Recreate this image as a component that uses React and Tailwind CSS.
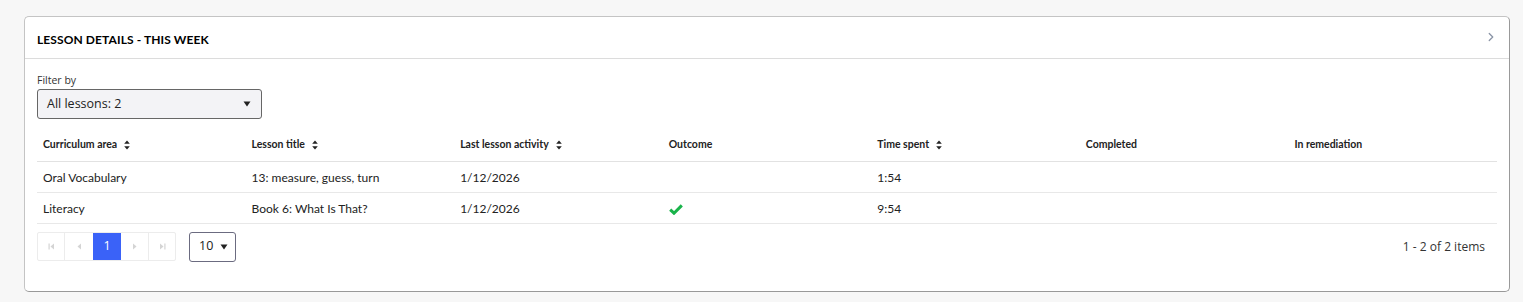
import { ChevronRight } from "lucide-react";

const columns = [
  { label: "Curriculum area", sort: true },
  { label: "Lesson title", sort: true },
  { label: "Last lesson activity", sort: true },
  { label: "Outcome" },
  { label: "Time spent", sort: true },
  { label: "Completed" },
  { label: "In remediation" },
];

const rows = [
  { area: "Oral Vocabulary", title: "13: measure, guess, turn", date: "1/12/2026", passed: false, time: "1:54" },
  { area: "Literacy", title: "Book 6: What Is That?", date: "1/12/2026", passed: true, time: "9:54" },
];

function SortIcon() {
  return (
    <svg width="6" height="10" viewBox="0 0 6 10" className="ml-[7px] inline-block">
      <path d="M3 0.5 L5.8 3.8 H0.2 Z" fill="#222" />
      <path d="M3 9.5 L5.8 6.2 H0.2 Z" fill="#222" />
    </svg>
  );
}

function Caret() {
  return (
    <svg width="8" height="6" viewBox="0 0 8 6">
      <path d="M0.5 0.5 H7.5 L4 5.5 Z" fill="#222" />
    </svg>
  );
}

function Check() {
  return (
    <svg width="14" height="11" viewBox="0 0 14 11">
      <path d="M1.2 5.6 L5 9.2 L12.8 1.4" fill="none" stroke="#19b34a" strokeWidth="3" />
    </svg>
  );
}

function PagerArrow({ kind }) {
  const c = "#d4d4d4";
  return (
    <svg width="7" height="7" viewBox="0 0 7 7">
      {kind === "first" && (
        <>
          <rect x="0.5" y="0.5" width="1.2" height="6" fill={c} />
          <path d="M6 0.5 V6.5 L2.5 3.5 Z" fill={c} />
        </>
      )}
      {kind === "prev" && <path d="M5 0.5 V6.5 L1.5 3.5 Z" fill={c} />}
      {kind === "next" && <path d="M2 0.5 V6.5 L5.5 3.5 Z" fill={c} />}
      {kind === "last" && (
        <>
          <path d="M1 0.5 V6.5 L4.5 3.5 Z" fill={c} />
          <rect x="5.3" y="0.5" width="1.2" height="6" fill={c} />
        </>
      )}
    </svg>
  );
}

export default function App() {
  return (
    <div className="min-h-[302px] bg-[#f7f7f7] pt-4 pl-6 pr-[13px] pb-[10px] font-['Open_Sans',sans-serif] text-[#222]">
      <div className="rounded-[5px] border border-[#c4c4c4] border-r-[#999] border-b-[#999] bg-white h-[276px]">
        <div className="flex h-[42px] items-center justify-between border-b border-[#dcdcdc] pl-[12px] pr-[11px]">
          <h2 className="mt-[5px] font-['Lato',sans-serif] text-[12px] font-bold text-black tracking-[0.1px]">
            LESSON DETAILS - THIS WEEK
          </h2>
          <ChevronRight size={14} strokeWidth={2.2} className="-mt-[2px] text-[#8a94a6]" />
        </div>

        <div className="px-3 pt-[14px]">
          <div className="text-[10.5px] leading-[14px] text-[#333]">Filter by</div>
          <button className="mt-[2px] flex h-[30px] w-[225px] items-center justify-between rounded-[3px] border border-[#666] bg-[#f3f3f6] pl-[9px] pr-[10px] text-[12.5px] text-[#222]">
            <span>All lessons: 2</span>
            <Caret />
          </button>

          <table className="w-[1460px] table-fixed border-collapse font-['Lato',sans-serif]">
            <thead>
              <tr className="h-[42px] border-b border-[#e2e2e2]">
                {columns.map((c) => (
                  <th key={c.label} className="px-[6px] pt-[11px] text-left text-[10.5px] font-bold text-[#222]">
                    <span className="inline-flex items-center">
                      {c.label}
                      {c.sort && <SortIcon />}
                    </span>
                  </th>
                ))}
              </tr>
            </thead>
            <tbody>
              {rows.map((r) => (
                <tr key={r.area} className="h-[31px] border-b border-[#e8e8e8] text-[12px] text-[#222]">
                  <td className="px-[6px] pt-[3px]">{r.area}</td>
                  <td className="px-[6px] pt-[3px]">{r.title}</td>
                  <td className="px-[6px] pt-[3px]">{r.date}</td>
                  <td className="px-[6px] pt-[3px]">{r.passed && <Check />}</td>
                  <td className="px-[6px] pt-[3px]">{r.time}</td>
                  <td className="px-[6px]"></td>
                  <td className="px-[6px]"></td>
                </tr>
              ))}
            </tbody>
          </table>

          <div className="mt-[8px] flex w-[1460px] items-center justify-between">
            <div className="flex items-center">
              <div className="flex h-[29px] overflow-hidden rounded-[2px] border border-[#ececec]">
                <span className="flex w-[27px] items-center justify-center border-r border-[#ececec]"><PagerArrow kind="first" /></span>
                <span className="flex w-[28px] items-center justify-center"><PagerArrow kind="prev" /></span>
                <span className="flex w-[28px] items-center justify-center bg-[#3a62f8] text-[12.5px] text-white">1</span>
                <span className="flex w-[28px] items-center justify-center border-r border-[#ececec]"><PagerArrow kind="next" /></span>
                <span className="flex w-[26px] items-center justify-center"><PagerArrow kind="last" /></span>
              </div>
              <button className="ml-[13px] flex h-[30px] w-[47px] items-center justify-between rounded-[3px] border border-[#6b6b80] bg-white pl-[9px] pr-[7px] text-[12.5px] text-[#222]">
                <span>10</span>
                <Caret />
              </button>
            </div>
            <div className="pr-[12px] text-[12px] text-[#333]">1 - 2 of 2 items</div>
          </div>
        </div>
      </div>
    </div>
  );
}
